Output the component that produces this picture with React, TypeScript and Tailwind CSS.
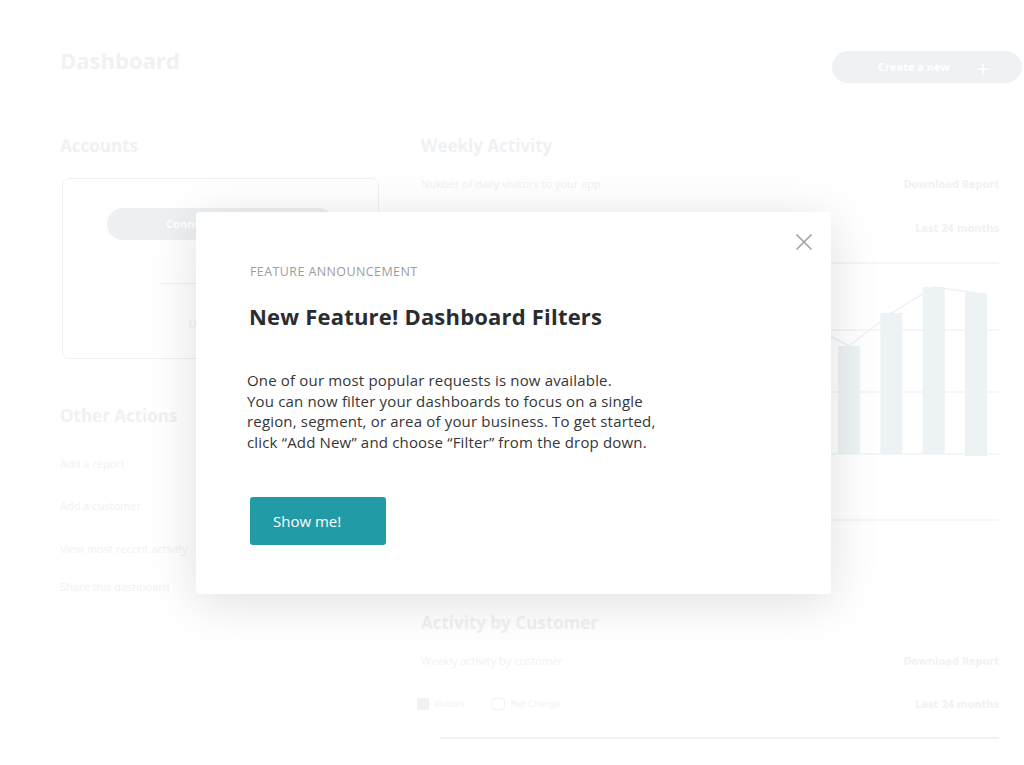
import { Plus } from 'lucide-react'

const bars = [150, 120, 170, 95, 140, 180, 110, 160, 130, 108, 141, 167, 161]

function WeeklyChart() {
  const w = 578
  const h = 270
  const base = 199
  const pitch = 42.3
  const x0 = w - 34 - pitch * (bars.length - 1)
  const pts = bars.map((b, i) => `${x0 + i * pitch + 11},${base - b}`).join(' ')
  return (
    <svg width={w} height={h} viewBox={`0 0 ${w} ${h}`} className="block">
      {[8, 75, 137, 199, 265].map((y) => (
        <line key={y} x1={0} x2={w} y1={y} y2={y} stroke="#f1f4f6" strokeWidth={1.5} />
      ))}
      {bars.map((b, i) => (
        <rect key={i} x={x0 + i * pitch} y={base - b} width={22} height={b + (i === bars.length - 1 ? 2 : 0)} fill="#edf2f4" />
      ))}
      <polyline points={pts} fill="none" stroke="#eef1f3" strokeWidth={1.5} />
    </svg>
  )
}

function Background() {
  return (
    <div className="flex flex-col pl-[60px] pr-[2px] text-[#eef2f5]">
      <div className="flex items-start justify-between pt-[45px]">
        <h1 className="text-[22px] font-bold leading-[30px]">Dashboard</h1>
        <div className="mt-[6px] flex h-[32px] w-[190px] items-center justify-end gap-[24px] rounded-full bg-[#eef2f4] pr-[30px]">
          <span className="text-[11px] font-bold text-white">Create a new</span>
          <Plus size={18} strokeWidth={2} className="mt-[4px] text-white" />
        </div>
      </div>

      <div className="mt-[51px] flex gap-[42px] pr-[23px]">
        <div className="flex w-[319px] shrink-0 flex-col">
          <h2 className="text-[17px] font-bold leading-[24px]">Accounts</h2>
          <div className="mt-[20px] ml-[2px] flex h-[181px] flex-col items-center rounded-[7px] border border-[#eef2f5] pt-[29px]">
            <div className="flex h-[32px] w-[228px] items-center justify-center rounded-full bg-[#edf1f3] text-[11px] font-bold text-white">
              Connect an account
            </div>
            <div className="mt-[43px] h-px w-[120px] bg-[#eef2f5]" />
            <div className="mt-[32px] text-[11px] text-[#eef2f5]">Upload a file</div>
          </div>

          <h2 className="mt-[45px] text-[17px] font-bold leading-[24px]">Other Actions</h2>
          <div className="mt-[28px] text-[11px] leading-[16px]">Add a report</div>
          <div className="mt-[26px] text-[11px] leading-[16px]">Add a customer</div>
          <div className="mt-[27px] text-[11px] leading-[16px]">View most recent activity</div>
          <div className="mt-[22px] text-[11px] leading-[16px]">Share this dashboard</div>
        </div>

        <div className="flex flex-1 flex-col">
          <h2 className="text-[17px] font-bold leading-[24px]">Weekly Activity</h2>
          <div className="mt-[18px] flex justify-between text-[11px] leading-[16px]">
            <span>Nukber of daily visitors to your app</span>
            <span className="font-bold">Download Report</span>
          </div>
          <div className="mt-[28px] text-right text-[11px] font-bold leading-[16px]">Last 24 months</div>
          <div className="mt-[19px]">
            <WeeklyChart />
          </div>

          <h2 className="mt-[86px] text-[17px] font-bold leading-[24px]">Activity by Customer</h2>
          <div className="mt-[18px] flex justify-between text-[11px] leading-[16px]">
            <span>Weekly activity by customer</span>
            <span className="font-bold">Download Report</span>
          </div>
          <div className="mt-[27px] flex items-center text-[9px] leading-[16px]">
            <span className="-ml-[4px] h-[12px] w-[12px] bg-[#eef2f4]" />
            <span className="ml-[5px]">Visitors</span>
            <span className="ml-[26px] h-[12px] w-[14px] rounded-[4px] border border-[#eef2f4]" />
            <span className="ml-[6px]">Net Change</span>
            <span className="ml-auto text-[11px] font-bold">Last 24 months</span>
          </div>
          <div className="mt-[25px] ml-[19px] h-[2px] bg-[#f1f4f6]" />
        </div>
      </div>
    </div>
  )
}

export default function App() {
  return (
    <div className="relative h-[765px] w-[1024px] overflow-hidden bg-white font-['Open_Sans',sans-serif]">
      <Background />

      <div className="absolute left-[196px] top-[212px] h-[382px] w-[635px] rounded-[4px] bg-white pl-[53px] pt-[52px] shadow-[0_8px_50px_rgba(0,0,0,0.13)]">
        <button className="absolute right-[19px] top-[22px] text-[#a3a3a3]">
          <svg width="16" height="16" viewBox="0 0 16 16" fill="none" stroke="currentColor" strokeWidth={1.7} strokeLinecap="round">
            <path d="M1 1L15 15M15 1L1 15" />
          </svg>
        </button>
        <div className="ml-[1px] text-[12.5px] uppercase leading-[16px] tracking-[0.4px] text-[#9d9d9d]">
          Feature Announcement
        </div>
        <h3 className="mt-[22px] text-[22px] font-bold leading-[28px] tracking-[0.2px] text-[#2a2d30]">
          New Feature! Dashboard Filters
        </h3>
        <p className="mt-[40px] -ml-[2px] text-[15px] leading-[20.5px] tracking-[0.17px] text-[#363636]">
          One of our most popular requests is now available.
          <br />
          You can now filter your dashboards to focus on a single
          <br />
          region, segment, or area of your business. To get started,
          <br />
          click “Add New” and choose “Filter” from the drop down.
        </p>
        <button className="mt-[45px] ml-[1px] flex h-[48px] w-[136px] items-center rounded-[3px] bg-[#219ba6] pl-[23px] text-[15px] text-white">
          Show me!
        </button>
      </div>
    </div>
  )
}
